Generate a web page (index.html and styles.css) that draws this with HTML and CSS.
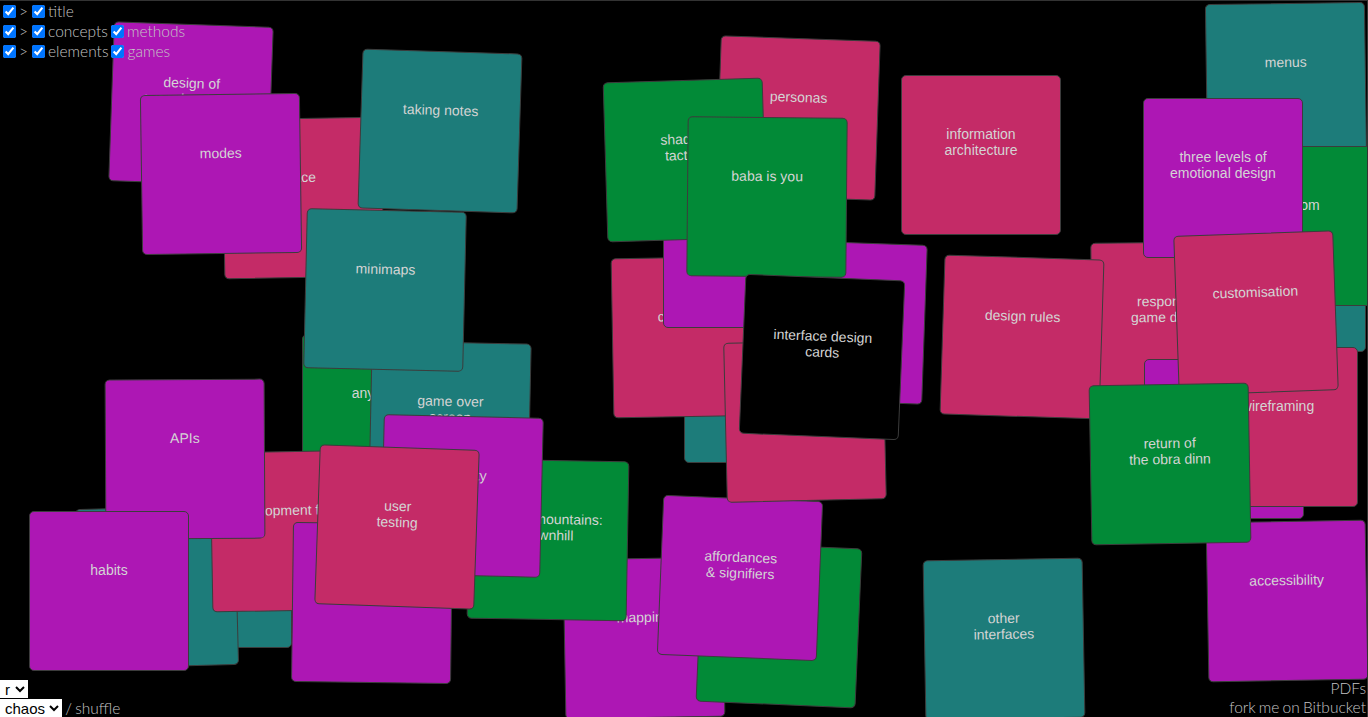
FILE: index.html
```html
<!DOCTYPE html>
<html lang="en">
<head>
<meta charset="utf-8">
<title>interface design cards</title>
<link rel="stylesheet" href="styles.css">
</head>
<body>
<div class="board">
  <div class="card concept" style="--x:191px;--y:104px;--r:2deg">design of<br>everyday things</div>
  <div class="card method" style="--x:303px;--y:198px;--r:-1deg">face</div>
  <div class="card concept" style="--x:221px;--y:174px;--r:-0.8deg">modes</div>
  <div class="card element" style="--x:440px;--y:131px;--r:1.8deg">taking notes</div>
  <div class="card game" style="--x:382px;--y:414px;--r:0deg">anywhere</div>
  <div class="card element" style="--x:450px;--y:422px;--r:1.2deg">game over<br>screen</div>
  <div class="card element" style="--x:385px;--y:290px;--r:1.3deg">minimaps</div>
  <div class="card element" style="--x:212px;--y:568px;--r:0deg">hud</div>
  <div class="card element" style="--x:157px;--y:587px;--r:-1.5deg">inventory</div>
  <div class="card method" style="--x:291px;--y:531px;--r:-1deg">development for all</div>
  <div class="card concept" style="--x:372px;--y:603px;--r:0.7deg">flow</div>
  <div class="card concept" style="--x:185px;--y:459px;--r:-0.3deg">APIs</div>
  <div class="card concept" style="--x:109px;--y:591px;--r:0deg">habits</div>
  <div class="card concept" style="--x:644px;--y:638px;--r:-1deg">mapping</div>
  <div class="card game" style="--x:779px;--y:625px;--r:2.5deg">celeste</div>
  <div class="card game" style="--x:548px;--y:540px;--r:1deg">lonely mountains:<br>downhill</div>
  <div class="card concept" style="--x:462px;--y:496px;--r:1.3deg">visibility</div>
  <div class="card method" style="--x:397px;--y:527px;--r:2deg">user<br>testing</div>
  <div class="card concept" style="--x:740px;--y:578px;--r:2.3deg">affordances<br>&amp; signifiers</div>
  <div class="card element" style="--x:764px;--y:383px;--r:0deg">buttons</div>
  <div class="card method" style="--x:692px;--y:337px;--r:-1deg">constraints</div>
  <div class="card concept" style="--x:743px;--y:248px;--r:0deg">feedback</div>
  <div class="card concept" style="--x:845px;--y:322px;--r:2deg">conceptual<br>models</div>
  <div class="card method" style="--x:805px;--y:421px;--r:-1.3deg">card sorting</div>
  <div class="card method" style="--x:798px;--y:118px;--r:2deg">personas</div>
  <div class="card game" style="--x:685px;--y:160px;--r:-1.7deg">shadow<br>tactics</div>
  <div class="card game" style="--x:767px;--y:197px;--r:0.5deg">baba is you</div>
  <div class="card title" style="--x:822px;--y:357px;--r:2.4deg">interface design<br>cards</div>
  <div class="card method" style="--x:981px;--y:155px;--r:0deg">information<br>architecture</div>
  <div class="card method" style="--x:1171px;--y:322px;--r:-0.5deg">responsive<br>game design</div>
  <div class="card method" style="--x:1022px;--y:337px;--r:1.8deg">design rules</div>
  <div class="card element" style="--x:1286px;--y:83px;--r:-0.8deg">menus</div>
  <div class="card element" style="--x:1286px;--y:272px;--r:0deg">tooltips</div>
  <div class="card game" style="--x:1292px;--y:226px;--r:0deg">the room</div>
  <div class="card concept" style="--x:1223px;--y:178px;--r:0deg">three levels of<br>emotional design</div>
  <div class="card concept" style="--x:1224px;--y:439px;--r:0deg">errors</div>
  <div class="card method" style="--x:1278px;--y:427px;--r:0deg">wireframing</div>
  <div class="card method" style="--x:1256px;--y:313px;--r:-2deg">customisation</div>
  <div class="card concept" style="--x:1287px;--y:601px;--r:-1deg">accessibility</div>
  <div class="card game" style="--x:1170px;--y:464px;--r:-1deg">return of<br>the obra dinn</div>
  <div class="card element" style="--x:1004px;--y:639px;--r:-1deg">other<br>interfaces</div>
</div>

<div class="filters">
  <div class="filter-row"><input type="checkbox" checked><span class="sep">&gt;</span><input type="checkbox" checked><label>title</label></div>
  <div class="filter-row"><input type="checkbox" checked><span class="sep">&gt;</span><input type="checkbox" checked><label>concepts</label><input type="checkbox" checked><label>methods</label></div>
  <div class="filter-row"><input type="checkbox" checked><span class="sep">&gt;</span><input type="checkbox" checked><label>elements</label><input type="checkbox" checked><label>games</label></div>
</div>

<div class="footer-left">
  <div class="foot-row"><select class="picker picker-short"><option>r</option></select></div>
  <div class="foot-row"><select class="picker"><option>chaos</option></select><span class="thin">&nbsp;/ shuffle</span></div>
</div>

<div class="footer-right">
  <div class="thin">PDFs</div>
  <div class="thin">fork me on Bitbucket</div>
</div>

<div class="frame"></div>
</body>
</html>
```

FILE: styles.css
```css
html, body {
  margin: 0;
  padding: 0;
  background: #000;
  overflow: hidden;
}

body {
  width: 1368px;
  height: 717px;
  position: relative;
  font-family: "Liberation Sans", Arial, sans-serif;
}

.board {
  position: relative;
  width: 1368px;
  height: 717px;
  overflow: hidden;
}

.card {
  position: absolute;
  left: calc(var(--x) - 80px);
  top: calc(var(--y) - 80px);
  transform: rotate(var(--r));
  width: 160px;
  height: 160px;
  box-sizing: border-box;
  padding: 50px 8px 0;
  border: 1px solid #3c3c3c;
  border-radius: 5px;
  color: #d4d4d4;
  font-family: "Liberation Sans", Arial, sans-serif;
  font-size: 14px;
  line-height: 16px;
  text-align: center;
  white-space: nowrap;
}

.concept { background: #ad17b4; }
.method { background: #c42b67; }
.game { background: #028a37; }
.element { background: #1d7c7a; }
.title { background: #000; }

.filters {
  position: absolute;
  top: 1px;
  left: 0;
  display: flex;
  flex-direction: column;
}

.filter-row {
  display: flex;
  align-items: center;
  height: 20px;
}

.filter-row input {
  width: 13px;
  height: 13px;
  margin: 3px;
}

.sep, .filter-row label, .thin {
  color: #c4c4c4;
  font-family: "Lato", "Open Sans", sans-serif;
  font-weight: 300;
  font-size: 15.5px;
  line-height: 20px;
  word-spacing: -1px;
}

.sep {
  padding: 0 1px 0 0;
}

.footer-left {
  position: absolute;
  left: 0;
  bottom: 0;
  display: flex;
  flex-direction: column;
}

.foot-row {
  display: flex;
  align-items: center;
  height: 19px;
}

.picker {
  font-family: "Liberation Sans", Arial, sans-serif;
  font-size: 15px;
  height: 18px;
  padding: 0 0 0 1px;
  margin: 0;
  border: none;
  border-radius: 0;
  background: #fff;
  color: #000;
}

.picker-short {
  width: 28px;
}

.footer-right {
  position: absolute;
  right: 2px;
  bottom: 0;
  text-align: right;
  display: flex;
  flex-direction: column;
}

.footer-right .thin {
  line-height: 19px;
}

.frame {
  position: absolute;
  inset: 0;
  border-top: 1px solid #333;
  border-right: 1px solid #333;
  pointer-events: none;
}
```
